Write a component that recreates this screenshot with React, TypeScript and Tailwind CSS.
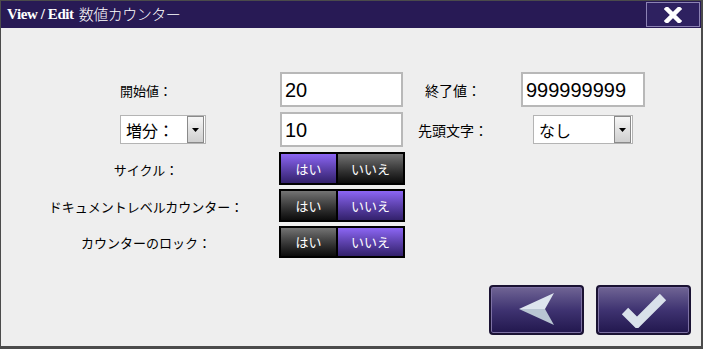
import React from "react";

const jp = "font-['Noto_Sans_CJK_JP','Noto_Sans',sans-serif]";

const Toggle = ({ yes }: { yes: boolean }) => {
  const on = "bg-gradient-to-b from-[#8c66f4] to-[#33216c]";
  const off = "bg-gradient-to-b from-[#747474] to-[#0c0c0c]";
  return (
    <div className={`flex w-[126px] h-full border-2 border-black bg-black text-white text-[13px] ${jp}`}>
      <div className={`w-[55px] flex items-center justify-center ${yes ? on : off}`}>はい</div>
      <div className={`ml-[2px] flex-1 flex items-center justify-center ${yes ? off : on}`}>いいえ</div>
    </div>
  );
};

const Select = ({ label, w, size }: { label: string; w: string; size: string }) => (
  <div className={`flex items-center h-[29px] ${w} bg-white border border-[#b4b4b4]`}>
    <span className={`flex-1 pl-[5px] text-black ${size} ${jp}`}>{label}</span>
    <div className="w-[17px] h-[27px] mr-[1px] border border-[#8a8a8a] bg-gradient-to-b from-[#f6f6f6] to-[#cfcfcf] flex items-center justify-center">
      <svg width="7" height="4" viewBox="0 0 7 4">
        <path d="M0 0h7L3.5 4z" fill="#000" />
      </svg>
    </div>
  </div>
);

const Field = ({ value, w }: { value: string; w: string }) => (
  <div className={`h-[35px] ${w} bg-white border-2 border-[#b8b8b8] flex items-center pl-[3px] text-[20px] text-black font-['Liberation_Sans',Arial,sans-serif]`}>
    {value}
  </div>
);

const Label = ({ text, size = "text-[13px]" }: { text: string; size?: string }) => (
  <span className={`text-black ${size} ${jp}`}>{text}</span>
);

const BigButton = ({ children }: { children: React.ReactNode }) => (
  <button className="w-[95px] h-[50px] rounded-[4px] border-2 border-[#1a1233] shadow-[inset_0_0_0_1px_#7d71a4] bg-gradient-to-b from-[#716595] via-[#3f3371] to-[#22174e] flex items-center justify-center">
    {children}
  </button>
);

export default function App() {
  return (
    <div className="w-[703px] h-[349px] bg-[#4b4b4b] overflow-hidden">
      <div className="w-[700px] h-[346px] ml-[1px] flex flex-col">
        <div className="mt-[1px] h-[27px] bg-[#281a55] flex items-center justify-between">
          <div className="flex items-center pl-[6px] text-white">
            <span className="text-[15px] font-bold tracking-[-0.4px] font-['Liberation_Serif','Times_New_Roman',serif]">
              View / Edit
            </span>
            <span className={`ml-[5px] text-[15px] tracking-[-0.5px] font-light ${jp}`}>数値カウンター</span>
          </div>
          <button className="w-[54px] h-[25px] mr-[1px] border border-[#8c82b4] bg-[#2e2160] flex items-center justify-center">
            <svg width="18" height="16" viewBox="0 0 18 16">
              <path d="M3 2L15 14M15 2L3 14" stroke="#fff" strokeWidth="4.5" strokeLinecap="square" />
            </svg>
          </button>
        </div>

        <div className="flex-1 bg-[#eeeeee] pt-[44px] pl-[19px] flex flex-col">
          <div className="flex items-center h-[35px]">
            <div className="w-[252px] text-center"><Label text="開始値：" /></div>
            <div className="ml-[8px]"><Field value="20" w="w-[123px]" /></div>
            <div className="w-[100px] text-center"><Label text="終了値：" size="text-[14px]" /></div>
            <div className="ml-[18px]"><Field value="999999999" w="w-[124px]" /></div>
          </div>

          <div className="flex items-center h-[35px] mt-[5px]">
            <div className="w-[252px] pl-[100px]">
              <Select label="増分：" w="w-[86px]" size="text-[16px]" />
            </div>
            <div className="ml-[8px]"><Field value="10" w="w-[123px]" /></div>
            <div className="w-[100px] text-center"><Label text="先頭文字：" size="text-[14px]" /></div>
            <div className="ml-[30px]">
              <Select label="なし" w="w-[100px]" size="text-[16px]" />
            </div>
          </div>

          <div className="flex items-center h-[33px] mt-[5px]">
            <div className="w-[252px] text-center"><Label text="サイクル：" /></div>
            <div className="ml-[7px] h-full"><Toggle yes /></div>
          </div>

          <div className="flex items-center h-[33px] mt-[4px]">
            <div className="w-[252px] text-center"><Label text="ドキュメントレベルカウンター：" /></div>
            <div className="ml-[7px] h-full"><Toggle yes={false} /></div>
          </div>

          <div className="flex items-center h-[32px] mt-[4px]">
            <div className="w-[252px] text-center"><Label text="カウンターのロック：" /></div>
            <div className="ml-[7px] h-full"><Toggle yes={false} /></div>
          </div>

          <div className="mt-[27px] flex justify-end gap-[12px] pr-[10px]">
            <BigButton>
              <svg width="40" height="36" viewBox="0 0 40 36">
                <path d="M2 17L37 1L28 17Z" fill="#dde5ee" />
                <path d="M2 17L28 17L37 33Z" fill="#b9c6d3" />
              </svg>
            </BigButton>
            <BigButton>
              <svg width="46" height="36" viewBox="0 0 46 36">
                <path d="M4 19L16 31L42 5" stroke="#d9e1ea" strokeWidth="9" fill="none" strokeLinejoin="miter" />
              </svg>
            </BigButton>
          </div>
        </div>
      </div>
    </div>
  );
}
